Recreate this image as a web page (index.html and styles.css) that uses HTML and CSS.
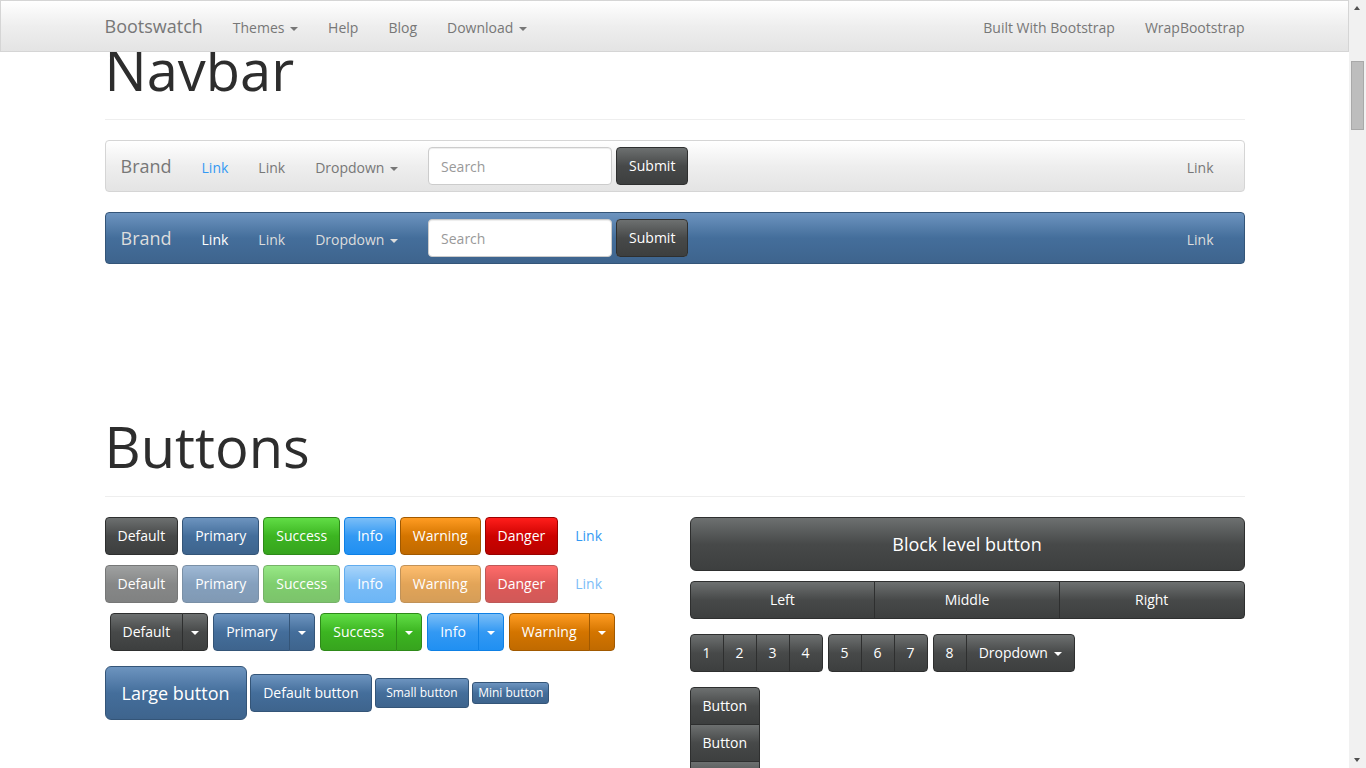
FILE: index.html
```html
<!DOCTYPE html>
<html lang="en">
<head>
<meta charset="utf-8">
<title>Bootswatch: Spacelab</title>
<link rel="stylesheet" href="styles.css">
</head>
<body>
<header class="topbar">
  <div class="container topbar-inner">
    <a class="brand" href="#">Bootswatch</a>
    <ul class="nav">
      <li><a href="#">Themes <span class="caret"></span></a></li>
      <li><a href="#">Help</a></li>
      <li><a href="#">Blog</a></li>
      <li><a href="#">Download <span class="caret"></span></a></li>
    </ul>
    <ul class="nav nav-right">
      <li><a href="#">Built With Bootstrap</a></li>
      <li><a href="#">WrapBootstrap</a></li>
    </ul>
  </div>
</header>

<div class="scrollbar" aria-hidden="true">
  <span class="scroll-arrow scroll-up"></span>
  <span class="scroll-thumb"></span>
  <span class="scroll-arrow scroll-down"></span>
</div>

<main class="container">
  <section class="section section-navbar">
    <div class="page-header"><h1>Navbar</h1></div>

    <nav class="navbar navbar-default">
      <a class="navbar-brand" href="#">Brand</a>
      <ul class="navbar-nav">
        <li class="active"><a href="#">Link</a></li>
        <li><a href="#">Link</a></li>
        <li><a href="#">Dropdown <span class="caret"></span></a></li>
      </ul>
      <form class="navbar-form">
        <input class="form-control" type="text" placeholder="Search">
        <button class="btn btn-default" type="button">Submit</button>
      </form>
      <ul class="navbar-nav navbar-right">
        <li><a href="#">Link</a></li>
      </ul>
    </nav>

    <nav class="navbar navbar-inverse">
      <a class="navbar-brand" href="#">Brand</a>
      <ul class="navbar-nav">
        <li class="active"><a href="#">Link</a></li>
        <li><a href="#">Link</a></li>
        <li><a href="#">Dropdown <span class="caret"></span></a></li>
      </ul>
      <form class="navbar-form">
        <input class="form-control" type="text" placeholder="Search">
        <button class="btn btn-default" type="button">Submit</button>
      </form>
      <ul class="navbar-nav navbar-right">
        <li><a href="#">Link</a></li>
      </ul>
    </nav>
  </section>

  <section class="section section-buttons">
    <div class="page-header"><h1>Buttons</h1></div>
    <div class="row">
      <div class="col">
        <div class="btn-row">
          <a class="btn btn-default" href="#">Default</a>
          <a class="btn btn-primary" href="#">Primary</a>
          <a class="btn btn-success" href="#">Success</a>
          <a class="btn btn-info" href="#">Info</a>
          <a class="btn btn-warning" href="#">Warning</a>
          <a class="btn btn-danger" href="#">Danger</a>
          <a class="btn btn-link" href="#">Link</a>
        </div>
        <div class="btn-row">
          <a class="btn btn-default disabled" href="#">Default</a>
          <a class="btn btn-primary disabled" href="#">Primary</a>
          <a class="btn btn-success disabled" href="#">Success</a>
          <a class="btn btn-info disabled" href="#">Info</a>
          <a class="btn btn-warning disabled" href="#">Warning</a>
          <a class="btn btn-danger disabled" href="#">Danger</a>
          <a class="btn btn-link disabled" href="#">Link</a>
        </div>
        <div class="btn-row btn-row-groups">
          <div class="btn-group">
            <a class="btn btn-default" href="#">Default</a>
            <a class="btn btn-default dropdown-toggle" href="#"><span class="caret"></span></a>
          </div>
          <div class="btn-group">
            <a class="btn btn-primary" href="#">Primary</a>
            <a class="btn btn-primary dropdown-toggle" href="#"><span class="caret"></span></a>
          </div>
          <div class="btn-group">
            <a class="btn btn-success" href="#">Success</a>
            <a class="btn btn-success dropdown-toggle" href="#"><span class="caret"></span></a>
          </div>
          <div class="btn-group">
            <a class="btn btn-info" href="#">Info</a>
            <a class="btn btn-info dropdown-toggle" href="#"><span class="caret"></span></a>
          </div>
          <div class="btn-group">
            <a class="btn btn-warning" href="#">Warning</a>
            <a class="btn btn-warning dropdown-toggle" href="#"><span class="caret"></span></a>
          </div>
        </div>
        <div class="btn-row btn-row-sizes">
          <a class="btn btn-primary btn-lg" href="#">Large button</a>
          <a class="btn btn-primary" href="#">Default button</a>
          <a class="btn btn-primary btn-sm" href="#">Small button</a>
          <a class="btn btn-primary btn-xs" href="#">Mini button</a>
        </div>
      </div>

      <div class="col">
        <a class="btn btn-default btn-lg btn-block" href="#">Block level button</a>
        <div class="btn-group btn-group-justified">
          <a class="btn btn-default" href="#">Left</a>
          <a class="btn btn-default" href="#">Middle</a>
          <a class="btn btn-default" href="#">Right</a>
        </div>
        <div class="btn-toolbar">
          <div class="btn-group">
            <a class="btn btn-default" href="#">1</a>
            <a class="btn btn-default" href="#">2</a>
            <a class="btn btn-default" href="#">3</a>
            <a class="btn btn-default" href="#">4</a>
          </div>
          <div class="btn-group">
            <a class="btn btn-default" href="#">5</a>
            <a class="btn btn-default" href="#">6</a>
            <a class="btn btn-default" href="#">7</a>
          </div>
          <div class="btn-group">
            <a class="btn btn-default" href="#">8</a>
            <a class="btn btn-default" href="#">Dropdown <span class="caret"></span></a>
          </div>
        </div>
        <div class="btn-group-vertical">
          <a class="btn btn-default" href="#">Button</a>
          <a class="btn btn-default" href="#">Button</a>
          <a class="btn btn-default" href="#">Button</a>
          <a class="btn btn-default" href="#">Button</a>
        </div>
      </div>
    </div>
  </section>
</main>
</body>
</html>
```

FILE: styles.css
```css
* { box-sizing: border-box; }

html { overflow: hidden; }
html, body { margin: 0; padding: 0; }

body {
  margin-right: 17px;
  font-family: "Open Sans", "Helvetica Neue", Arial, sans-serif;
  font-size: 14px;
  line-height: 20px;
  color: #666666;
  background: #ffffff;
}

a { text-decoration: none; }
ul { list-style: none; margin: 0; padding: 0; }

.container {
  width: 1140px;
  margin: 0 auto;
}

/* ---------- fake window scrollbar (overlay) ---------- */
.scrollbar {
  position: fixed;
  top: 0;
  right: 0;
  bottom: 0;
  width: 17px;
  background: #f1f1f1;
  z-index: 20;
}
.scroll-arrow {
  position: absolute;
  left: 0;
  width: 17px;
  height: 17px;
}
.scroll-arrow::after {
  content: "";
  position: absolute;
  left: 5px;
  width: 0;
  height: 0;
  border-left: 3.5px solid transparent;
  border-right: 3.5px solid transparent;
}
.scroll-up { top: 0; }
.scroll-up::after { top: 6px; border-bottom: 4px solid #505050; }
.scroll-down { bottom: 0; }
.scroll-down::after { bottom: 6px; border-top: 4px solid #505050; }
.scroll-thumb {
  position: absolute;
  left: 2px;
  top: 61px;
  width: 13px;
  height: 69px;
  background: #bdbdbd;
  border: 1px solid #a9a9a9;
}

/* ---------- fixed top bar ---------- */
.topbar {
  position: fixed;
  top: 0;
  left: 0;
  right: 17px;
  height: 52px;
  z-index: 10;
  border: 1px solid #d5d5d5;
  background-image: linear-gradient(#ffffff, #eeeeee 50%, #e4e4e4);
}
.topbar-inner {
  display: flex;
  align-items: center;
  height: 50px;
}
.topbar .brand {
  font-size: 18px;
  line-height: 20px;
  color: #777777;
  margin-right: 15px;
}
.topbar .nav { display: flex; }
.topbar .nav a {
  display: block;
  padding: 3px 15px 0;
  color: #777777;
  line-height: 20px;
}
.topbar .nav-right { margin-left: auto; }
.topbar .nav-right li:last-child a { padding-right: 0; }

/* ---------- carets ---------- */
.caret {
  display: inline-block;
  width: 0;
  height: 0;
  margin-left: 2px;
  vertical-align: middle;
  border-top: 4px solid;
  border-right: 4px solid transparent;
  border-left: 4px solid transparent;
}

/* ---------- page sections ---------- */
main.container { padding-top: 38px; padding-bottom: 60px; }

.page-header {
  border-bottom: 1px solid #eeeeee;
  padding-bottom: 19px;
  margin-bottom: 20px;
}
.page-header h1 {
  margin: 0;
  font-size: 56px;
  line-height: 62px;
  font-weight: 400;
  color: #2d2d2d;
}

.section-buttons { margin-top: 151px; }

/* ---------- navbars ---------- */
.navbar {
  display: flex;
  align-items: center;
  height: 52px;
  padding: 0 15px;
  border: 1px solid;
  border-radius: 4px;
  margin-bottom: 20px;
}
.navbar-inverse { margin-bottom: 0; }

.navbar-default {
  border-color: #d5d5d5;
  background-image: linear-gradient(#ffffff, #eeeeee 50%, #e4e4e4);
}
.navbar-inverse {
  border-color: #345578;
  background-image: linear-gradient(#6d94bf, #446e9b 50%, #3e648d);
}
.navbar-brand {
  font-size: 18px;
  line-height: 20px;
  margin-right: 15px;
}
.navbar-nav { display: flex; }
.navbar-nav a {
  display: block;
  padding: 3px 15px 0;
  line-height: 20px;
}
.navbar-right { margin-left: auto; }

.navbar-default .navbar-brand,
.navbar-default .navbar-nav a { color: #777777; }
.navbar-default .navbar-nav .active a { color: #3399f3; }

.navbar-inverse .navbar-brand,
.navbar-inverse .navbar-nav a { color: #dddddd; }
.navbar-inverse .navbar-nav .active a { color: #ffffff; }

.navbar-form {
  display: flex;
  align-items: center;
  gap: 4px;
  padding: 0 15px;
  margin: 0;
}
.form-control {
  width: 184px;
  height: 38px;
  padding: 8px 12px;
  font-family: inherit;
  font-size: 14px;
  line-height: 20px;
  color: #666666;
  background: #ffffff;
  border: 1px solid #cccccc;
  border-radius: 4px;
  box-shadow: inset 0 1px 1px rgba(0, 0, 0, 0.075);
  outline: none;
}
.form-control::placeholder { color: #999999; opacity: 1; }

/* ---------- buttons ---------- */
.btn {
  display: inline-block;
  padding: 8px 12px;
  font-family: inherit;
  font-size: 14px;
  line-height: 20px;
  font-weight: 400;
  text-align: center;
  white-space: nowrap;
  color: #ffffff;
  border: 1px solid transparent;
  border-radius: 4px;
  cursor: pointer;
  vertical-align: middle;
}
.btn-default {
  background-image: linear-gradient(#6d7070, #474949 50%, #3d3f3f);
  border-color: #2e2f2f;
}
.btn-primary {
  background-image: linear-gradient(#6d94bf, #446e9b 50%, #3e648d);
  border-color: #345578;
}
.btn-success {
  background-image: linear-gradient(#61dd46, #3cb521 50%, #37a41e);
  border-color: #2e8a19;
}
.btn-info {
  background-image: linear-gradient(#7bbef7, #3399f3 50%, #2090f2);
  border-color: #0e80e5;
}
.btn-warning {
  background-image: linear-gradient(#ff9c22, #d47500 50%, #c06a00);
  border-color: #a15900;
}
.btn-danger {
  background-image: linear-gradient(#ff1e1b, #cd0200 50%, #b90200);
  border-color: #9a0100;
}
.btn-link {
  color: #3399f3;
  background: none;
  border-color: transparent;
}
.btn.disabled { opacity: 0.65; cursor: not-allowed; }

.btn-lg {
  padding: 14px 16px;
  font-size: 18px;
  line-height: 24px;
  border-radius: 6px;
}
.btn-sm {
  padding: 5px 10px;
  font-size: 12px;
  line-height: 18px;
  border-radius: 3px;
}
.btn-xs {
  padding: 1px 5px;
  font-size: 12px;
  line-height: 18px;
  border-radius: 3px;
}
.btn-block { display: block; width: 100%; }

/* ---------- layout of button demo ---------- */
.row {
  display: flex;
  gap: 30px;
}
.col { flex: 1 1 0; min-width: 0; }

.btn-row {
  display: flex;
  align-items: center;
  gap: 4px;
  margin-bottom: 10px;
}
.btn-row-groups { gap: 5px; margin-left: 5px; }
.btn-row-sizes { gap: 3.6px; margin-top: 15px; }

/* ---------- groups ---------- */
.btn-group { display: inline-flex; }
.btn-group > .btn + .btn { margin-left: -1px; }
.btn-group > .btn:not(:first-child) { border-top-left-radius: 0; border-bottom-left-radius: 0; }
.btn-group > .btn:not(:last-child) { border-top-right-radius: 0; border-bottom-right-radius: 0; }
.btn-group > .dropdown-toggle { padding-left: 8px; padding-right: 8px; }
.btn-group > .dropdown-toggle .caret { margin-left: 0; }

.btn-block + .btn-group-justified { margin-top: 10px; }
.btn-group-justified { display: flex; width: 100%; }
.btn-group-justified > .btn { flex: 1 1 0; }

.btn-toolbar {
  display: flex;
  gap: 5px;
  margin-top: 15px;
}

.btn-group-vertical {
  display: inline-flex;
  flex-direction: column;
  margin-top: 15px;
}
.btn-group-vertical > .btn + .btn { margin-top: -1px; }
.btn-group-vertical > .btn:not(:first-child) { border-top-left-radius: 0; border-top-right-radius: 0; }
.btn-group-vertical > .btn:not(:last-child) { border-bottom-left-radius: 0; border-bottom-right-radius: 0; }
```
